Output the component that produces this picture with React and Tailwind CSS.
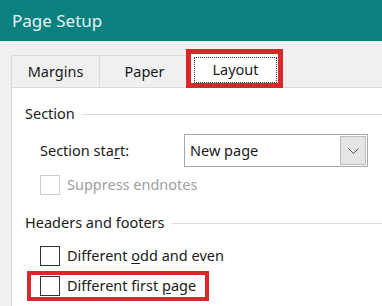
export default function App() {
  const font = { fontFamily: '"Noto Sans", "Open Sans", sans-serif' };
  return (
    <div
      className="relative w-[382px] h-[306px] overflow-hidden bg-[#f0f0f0] text-[14.5px] text-[#1a1a1a]"
      style={font}
    >
      {/* Title bar */}
      <div className="flex h-[41px] items-center bg-[#0a8080] pl-[12px] text-[17px] text-[#e8f4f4]">
        Page Setup
      </div>

      {/* Tabs */}
      <div className="mt-[12px] flex h-[34px] items-end pl-[11px]">
        <div className="flex h-[32px] w-[89px] items-center justify-center border-x border-t border-[#d9d9d9]">
          Margins
        </div>
        <div className="flex h-[32px] w-[90px] items-center justify-center border-r border-t border-[#d9d9d9]">
          Paper
        </div>
        <div className="flex h-[34px] w-[91px] items-center justify-center bg-white">
          <div className="flex h-[26px] w-[83px] items-center justify-center border border-dotted border-[#333]">
            Layout
          </div>
        </div>
      </div>

      {/* Content panel */}
      <div className="ml-[11px] h-[219px] border-l border-t border-[#d9d9d9] bg-white">
        <div className="mt-[16px] flex h-[20px] items-center pl-[13px]">
          <span>Section</span>
          <div className="ml-[7px] h-px flex-1 bg-[#dcdcdc]" />
        </div>

        <div className="mt-[10px] flex h-[33px] items-center pl-[28px]">
          <span className="w-[144px]">
            Section sta<u className="underline-offset-2">r</u>t:
          </span>
          <div className="flex h-[33px] w-[184px] items-center border border-[#a8a8a8] bg-white">
            <span className="flex-1 pl-[5px]">New page</span>
            <div className="mr-[1px] flex h-[29px] w-[26px] items-center justify-center border border-[#bdbdbd] bg-[#e5e5e5]">
              <svg width="11" height="6" viewBox="0 0 11 6" fill="none">
                <path d="M0.5 0.5 L5.5 5.5 L10.5 0.5" stroke="#555" strokeWidth="1" />
              </svg>
            </div>
          </div>
        </div>

        <div className="mt-[8px] flex h-[20px] items-center pl-[28px] text-[#a0a0a0]">
          <div className="h-[20px] w-[20px] border border-[#cccccc] bg-white" />
          <span className="ml-[7px]">Suppress endnotes</span>
        </div>

        <div className="mt-[18px] flex h-[20px] items-center pl-[13px]">
          <span>Headers and footers</span>
          <div className="ml-[7px] h-px flex-1 bg-[#dcdcdc]" />
        </div>

        <div className="mt-[13px] flex h-[20px] items-center pl-[28px]">
          <div className="h-[20px] w-[20px] border border-[#333] bg-white" />
          <span className="ml-[7px]">
            Different <u className="underline-offset-2">o</u>dd and even
          </span>
        </div>

        <div className="mt-[10px] flex h-[20px] items-center pl-[28px]">
          <div className="h-[20px] w-[20px] border border-[#333] bg-white" />
          <span className="ml-[7px]">
            Different first <u className="underline-offset-2">p</u>age
          </span>
        </div>
      </div>

      {/* Red annotation boxes */}
      <div className="pointer-events-none absolute left-[186px] top-[49px] h-[39px] w-[97px] border-[5px] border-[#dc262c]" />
      <div className="pointer-events-none absolute left-[27px] top-[271px] h-[30px] w-[182px] border-[4px] border-[#dc262c]" />
    </div>
  );
}
